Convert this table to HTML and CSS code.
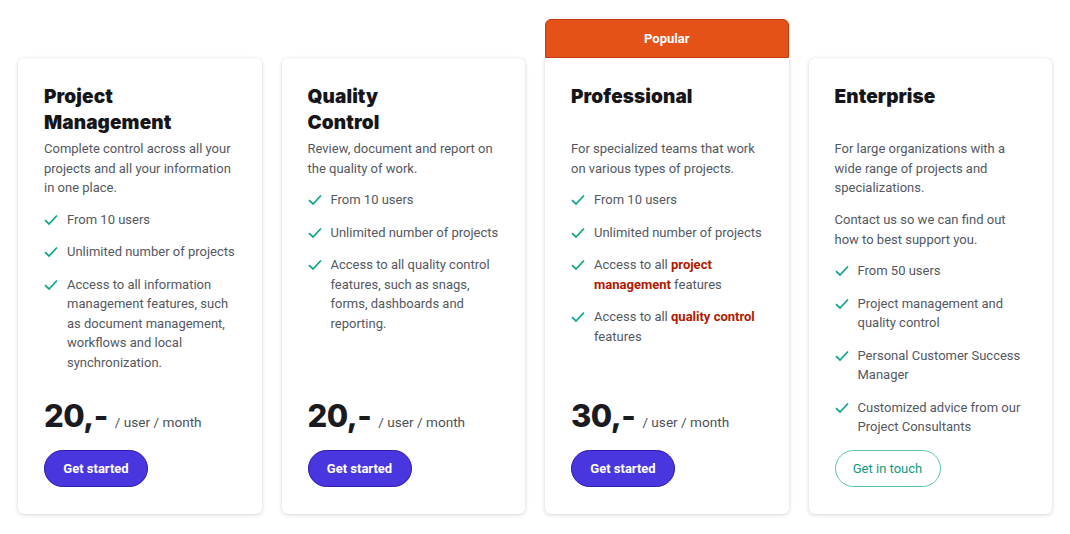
FILE: index.html
```html
<!DOCTYPE html>
<html lang="en">
<head>
<meta charset="utf-8">
<title>Pricing</title>
<link rel="stylesheet" href="styles.css">
</head>
<body>
<main class="pricing">
  <section class="card">
    <h2 class="title">Project<br>Management</h2>
    <p class="desc">Complete control across all your projects and all your information in one place.</p>
    <ul class="features">
      <li><svg class="check" viewBox="0 0 14 12"><path d="M1 6.2 L5 10 L13 1.5"/></svg><p class="ftext">From 10 users</p></li>
      <li><svg class="check" viewBox="0 0 14 12"><path d="M1 6.2 L5 10 L13 1.5"/></svg><p class="ftext">Unlimited number of projects</p></li>
      <li><svg class="check" viewBox="0 0 14 12"><path d="M1 6.2 L5 10 L13 1.5"/></svg><p class="ftext">Access to all information management features, such as document management, workflows and local synchronization.</p></li>
    </ul>
    <div class="footer">
      <div class="price"><span class="amount">20,-</span><span class="unit">/ user / month</span></div>
      <a class="btn btn-primary" href="#">Get started</a>
    </div>
  </section>

  <section class="card">
    <h2 class="title">Quality<br>Control</h2>
    <p class="desc">Review, document and report on the quality of work.</p>
    <ul class="features">
      <li><svg class="check" viewBox="0 0 14 12"><path d="M1 6.2 L5 10 L13 1.5"/></svg><p class="ftext">From 10 users</p></li>
      <li><svg class="check" viewBox="0 0 14 12"><path d="M1 6.2 L5 10 L13 1.5"/></svg><p class="ftext">Unlimited number of projects</p></li>
      <li><svg class="check" viewBox="0 0 14 12"><path d="M1 6.2 L5 10 L13 1.5"/></svg><p class="ftext">Access to all quality control features, such as snags, forms, dashboards and reporting.</p></li>
    </ul>
    <div class="footer">
      <div class="price"><span class="amount">20,-</span><span class="unit">/ user / month</span></div>
      <a class="btn btn-primary" href="#">Get started</a>
    </div>
  </section>

  <section class="card card-popular">
    <div class="badge">Popular</div>
    <h2 class="title">Professional</h2>
    <p class="desc">For specialized teams that work on various types of projects.</p>
    <ul class="features">
      <li><svg class="check" viewBox="0 0 14 12"><path d="M1 6.2 L5 10 L13 1.5"/></svg><p class="ftext">From 10 users</p></li>
      <li><svg class="check" viewBox="0 0 14 12"><path d="M1 6.2 L5 10 L13 1.5"/></svg><p class="ftext">Unlimited number of projects</p></li>
      <li><svg class="check" viewBox="0 0 14 12"><path d="M1 6.2 L5 10 L13 1.5"/></svg><p class="ftext">Access to all <strong class="hl">project</strong> <strong class="hl">management</strong> features</p></li>
      <li><svg class="check" viewBox="0 0 14 12"><path d="M1 6.2 L5 10 L13 1.5"/></svg><p class="ftext">Access to all <strong class="hl">quality control</strong> features</p></li>
    </ul>
    <div class="footer">
      <div class="price"><span class="amount">30,-</span><span class="unit">/ user / month</span></div>
      <a class="btn btn-primary" href="#">Get started</a>
    </div>
  </section>

  <section class="card">
    <h2 class="title">Enterprise</h2>
    <p class="desc">For large organizations with a wide range of projects and specializations.</p>
    <p class="desc desc-extra">Contact us so we can find out how to best support you.</p>
    <ul class="features">
      <li><svg class="check" viewBox="0 0 14 12"><path d="M1 6.2 L5 10 L13 1.5"/></svg><p class="ftext">From 50 users</p></li>
      <li><svg class="check" viewBox="0 0 14 12"><path d="M1 6.2 L5 10 L13 1.5"/></svg><p class="ftext">Project management and quality control</p></li>
      <li><svg class="check" viewBox="0 0 14 12"><path d="M1 6.2 L5 10 L13 1.5"/></svg><p class="ftext">Personal Customer Success Manager</p></li>
      <li><svg class="check" viewBox="0 0 14 12"><path d="M1 6.2 L5 10 L13 1.5"/></svg><p class="ftext">Customized advice from our Project Consultants</p></li>
    </ul>
    <div class="footer">
      <a class="btn btn-outline" href="#">Get in touch</a>
    </div>
  </section>
</main>
</body>
</html>
```

FILE: styles.css
```css
* { box-sizing: border-box; }

html, body {
  margin: 0;
  padding: 0;
  background: #ffffff;
}

body {
  font-family: Roboto, "Liberation Sans", Arial, sans-serif;
  color: #545861;
}

.pricing {
  display: grid;
  grid-template-columns: repeat(4, 1fr);
  gap: 20px;
  padding: 58px 18px 20px;
  width: 1070px;
}

.card {
  position: relative;
  display: flex;
  flex-direction: column;
  height: 456px;
  background: #fff;
  border-radius: 6px;
  box-shadow: 0 1px 4px rgba(0, 0, 0, 0.16), 0 0 1px rgba(0, 0, 0, 0.08);
  padding: 26px 24px 27px 26px;
}

.card-popular {
  border-top-left-radius: 0;
  border-top-right-radius: 0;
}

.badge {
  position: absolute;
  left: 0;
  right: 0;
  bottom: 100%;
  height: 39px;
  background: #e4521a;
  border: 1px solid #c23c0e;
  border-radius: 6px 6px 0 0;
  color: #fff;
  font-weight: 700;
  font-size: 13px;
  display: flex;
  align-items: center;
  justify-content: center;
}

.title {
  margin: 0;
  font-family: Inter, Lato, sans-serif;
  font-weight: 900;
  font-size: 19px;
  line-height: 26px;
  min-height: 52px;
  color: #16161a;
  letter-spacing: 0.1px;
}

.desc {
  margin: 3px 0 0;
  font-size: 13px;
  line-height: 19.5px;
}

.desc-extra {
  margin-top: 12.5px;
}

.features {
  list-style: none;
  margin: 12px 0 0;
  padding: 0;
  display: flex;
  flex-direction: column;
  gap: 13px;
}

.features li {
  display: flex;
  align-items: flex-start;
  gap: 9px;
}

.ftext {
  margin: 0;
  font-size: 13px;
  line-height: 19.5px;
}

.check {
  flex: none;
  width: 14px;
  height: 12px;
  margin-top: 4px;
  fill: none;
  stroke: #14a58c;
  stroke-width: 1.8;
}

.hl {
  color: #b11800;
  font-weight: 700;
}

.footer {
  margin-top: auto;
  display: flex;
  flex-direction: column;
  align-items: flex-start;
}

.price {
  display: flex;
  align-items: baseline;
  gap: 7px;
  line-height: 36px;
  margin-bottom: 10px;
}

.amount {
  font-family: Inter, Lato, sans-serif;
  font-weight: 800;
  font-size: 31px;
  color: #1b1b1f;
  letter-spacing: -0.5px;
}

.unit {
  font-size: 13.6px;
  color: #4d5158;
}

.btn {
  display: inline-flex;
  align-items: center;
  justify-content: center;
  height: 37px;
  padding: 0 16px;
  border-radius: 19px;
  font-size: 13px;
  text-decoration: none;
  white-space: nowrap;
}

.btn-primary {
  background: #4a36de;
  border: 1px solid #2c1cad;
  color: #fff;
  font-weight: 700;
  width: 104px;
}

.btn-outline {
  border: 1px solid #5bc6ae;
  color: #0f9b81;
  width: 106px;
  background: #fff;
}
```
